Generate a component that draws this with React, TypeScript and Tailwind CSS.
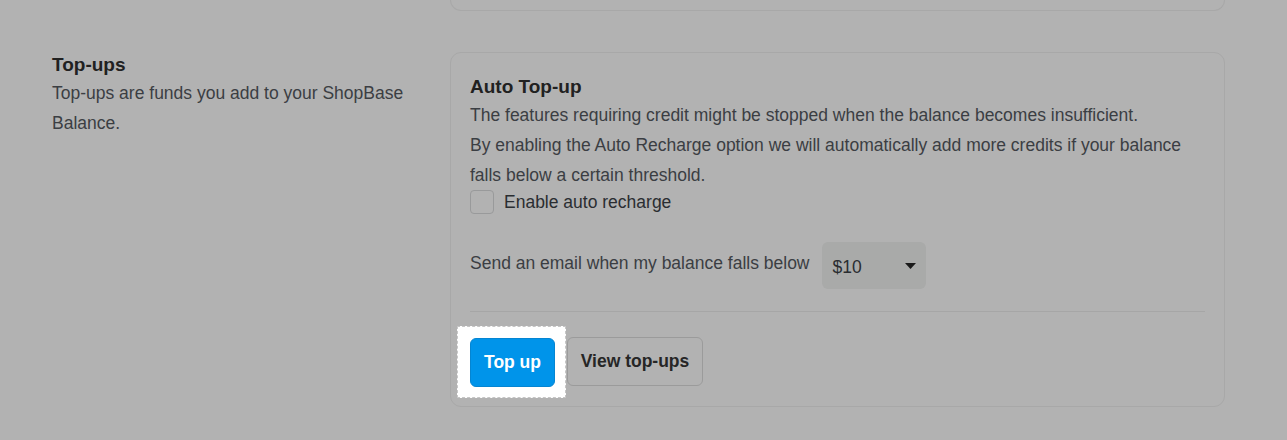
import { useState } from "react";

const SEND_THRESHOLDS = ["$10", "$20", "$50", "$100"];

function Caret() {
  return (
    <svg width="11" height="6" viewBox="0 0 11 6" aria-hidden="true">
      <path d="M0 0h11L5.5 6z" fill="#1a1a1a" />
    </svg>
  );
}

export default function App() {
  const [autoRecharge, setAutoRecharge] = useState(false);
  const [threshold] = useState(SEND_THRESHOLDS[0]);

  return (
    <div className="min-h-screen w-full bg-[#b2b2b2] font-['Liberation_Sans',Arial,sans-serif] text-[17.5px] text-[#3b3e43]">
      <div className="grid grid-cols-[398px_775px] pl-[52px]">
        {/* tail of the card above */}
        <div />
        <div className="h-[11px] rounded-b-[11px] border-x border-b border-[#a8a8a8]" />

        {/* Top-ups section */}
        <div className="pt-[41px] pr-6">
          <h2 className="text-[19px] font-bold leading-[26px] text-[#212121]">Top-ups</h2>
          <p className="leading-[30px]">
            Top-ups are funds you add to your ShopBase Balance.
          </p>
        </div>

        <div className="mt-[41px] rounded-[11px] border border-[#a8a8a8] px-[19px] pt-[20px] pb-[20px]">
          <h3 className="text-[19px] font-bold leading-[27px] text-[#212121]">Auto Top-up</h3>
          <p className="leading-[30px]">
            The features requiring credit might be stopped when the balance becomes insufficient.
          </p>
          <p className="leading-[30px]">
            By enabling the Auto Recharge option we will automatically add more credits if your balance falls below a certain threshold.
          </p>

          <label className="flex h-6 items-center gap-[10px] text-[#2a2d31]">
            <button
              type="button"
              onClick={() => setAutoRecharge(!autoRecharge)}
              className="h-6 w-6 rounded-[4px] border border-[#999a9b] bg-[#b2b2b2]"
            />
            Enable auto recharge
          </label>

          <div className="mt-[28px] flex items-center gap-3">
            <span className="-mt-[5px]">Send an email when my balance falls below</span>
            <div className="flex h-[47px] w-[104px] items-center justify-between rounded-[6px] bg-[#a9aaa9] pl-[11px] pr-[10px] text-[#2a2d31]">
              <span className="mt-[3px]">{threshold}</span>
              <Caret />
            </div>
          </div>

          <div className="mt-[22px] border-t border-[#a6a6a6]" />

          <div className="mt-[25px] flex items-center">
            <div className="-my-[12px] -ml-[13px] border border-dashed border-[#c6c6c6] bg-white pt-[11px] pb-[10px] pl-[12px] pr-[10px]">
              <button
                type="button"
                className="flex h-[49px] w-[85px] items-center justify-center rounded-[6px] border border-[#0585d2] bg-[#0094ea] font-bold text-white"
              >
                Top up
              </button>
            </div>
            <button
              type="button"
              className="ml-px flex h-[49px] w-[136px] items-center justify-center rounded-[6px] border border-[#9b9b9b] font-bold text-[#262626]"
            >
              View top-ups
            </button>
          </div>
        </div>
      </div>
    </div>
  );
}
